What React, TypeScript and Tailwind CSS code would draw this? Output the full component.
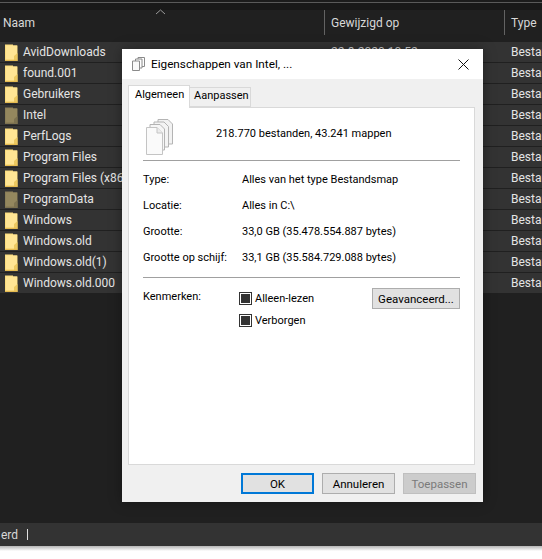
const names: [string, boolean][] = [
  ["AvidDownloads", false],
  ["found.001", false],
  ["Gebruikers", false],
  ["Intel", true],
  ["PerfLogs", false],
  ["Program Files", false],
  ["Program Files (x86)", false],
  ["ProgramData", true],
  ["Windows", false],
  ["Windows.old", false],
  ["Windows.old(1)", false],
  ["Windows.old.000", false],
];

function Folder({ dim }: { dim: boolean }) {
  return (
    <svg width="13" height="17" viewBox="0 0 13 17" className="shrink-0">
      <path d="M0 0.5 H8 V1.5 H12.5 V17 H0 Z" fill={dim ? "#8b7f58" : "#fbdc7c"} />
      <path d="M1 1.5 H12 V15.5 H1 Z" fill={dim ? "#94875e" : "#ffe594"} />
      <path d="M9 16 V12 L12.5 9 V16 Z" fill={dim ? "#7d7250" : "#ecc860"} />
      <path d="M0 15.8 H12.5 V17 H0 Z" fill={dim ? "#7d7250" : "#e6bb50"} />
    </svg>
  );
}

function SmallPages() {
  return (
    <svg width="13" height="14" viewBox="0 0 13 14" fill="none">
      <path d="M6 0.5 H12.5 V9.5 H6 Z" fill="#ffffff" stroke="#8a8a8a" />
      <path d="M3.5 2 H10 V11 H3.5 Z" fill="#ffffff" stroke="#8a8a8a" />
      <path d="M0.5 4 H7.5 V13.5 H0.5 Z" fill="#f8f8f8" stroke="#8a8a8a" />
    </svg>
  );
}

function BigPages() {
  return (
    <svg width="27" height="36" viewBox="0 0 27 36" fill="none">
      <path d="M12 0.5 H22 L26.5 5 V25 H12 Z" fill="#f2f2f2" stroke="#b4b4b4" />
      <path d="M8 3 H18 L22.5 7.5 V28 H8 Z" fill="#f4f4f4" stroke="#b4b4b4" />
      <path d="M4 5.5 H14 L18.5 10 V31 H4 Z" fill="#f6f6f6" stroke="#b4b4b4" />
      <path d="M0.5 8.5 H11 L16.5 14 V35.5 H0.5 Z" fill="#fafafa" stroke="#c4c4c4" />
      <path d="M11 8.5 V14 H16.5" fill="#ececec" stroke="#c4c4c4" />
    </svg>
  );
}

function Check({ label }: { label: string }) {
  return (
    <div className="flex items-center gap-[3px] h-[13px]">
      <div className="w-[13px] h-[13px] border border-[#333333] bg-white flex items-center justify-center">
        <div className="w-[9px] h-[9px] bg-[#333333]" />
      </div>
      <span>{label}</span>
    </div>
  );
}

function Row({ label, value }: { label: string; value: string }) {
  return (
    <div className="flex h-[26px] items-center">
      <div className="w-[99px] shrink-0">{label}</div>
      <div className="whitespace-nowrap">{value}</div>
    </div>
  );
}

export default function App() {
  return (
    <div
      className="relative w-[542px] h-[559px] overflow-hidden bg-white flex flex-col text-[11px] leading-[16px]"
      style={{ fontFamily: 'Roboto, "Noto Sans", sans-serif' }}
    >
      <div className="h-[546px] bg-[#202020] flex flex-col">
        <div className="h-[2px] bg-[#1c1c1c]" />
        <div className="h-px bg-[#5a5a5a]" />
        <div className="h-[7px] bg-[#191919]" />
        <div className="relative h-[32px] bg-[#202020] text-[#d8d8d8] flex items-start text-[12px]">
          <div className="w-[324px] shrink-0 pl-[3px] pt-[5px]">Naam</div>
          <div className="w-[180px] shrink-0 h-[25px] border-l border-[#636363] pl-[6px] pt-[5px]">Gewijzigd op</div>
          <div className="h-[25px] border-l border-[#636363] pl-[6px] pt-[5px]">Type</div>
          <svg width="12" height="6" viewBox="0 0 12 6" className="absolute left-[155px] top-[-1px]" fill="none">
            <path d="M1 5 L5.5 1 L10 5" stroke="#9a9a9a" />
          </svg>
        </div>
        <div className="flex flex-col gap-px text-[12px]">
          {names.map(([n, dim], i) => (
            <div key={n} className="h-[20px] bg-[#333333] flex items-center text-[#e4e4e4]">
              <div className="w-[331px] shrink-0 flex items-center pl-[5px] gap-[5px]">
                <Folder dim={dim} />
                <span className="whitespace-nowrap">{n}</span>
              </div>
              <div className="w-[180px] shrink-0 text-[#d0d0d0] whitespace-nowrap">
                {i === 0 ? "22-8-2020 10:52" : ""}
              </div>
              <div className="whitespace-nowrap">Bestandsmap</div>
            </div>
          ))}
        </div>
        <div className="flex-1" />
        <div className="h-[23px] bg-[#333333] text-[#d8d8d8] flex items-center text-[12px]">
          <span className="ml-[1px] w-[16px]">erd</span>
          <div className="ml-[10px] w-px h-[11px] bg-[#e0e0e0]" />
        </div>
      </div>
      <div className="h-[5px] bg-gradient-to-b from-[#b5b5b5] to-white" />

      <div className="absolute left-[122px] top-[49px] w-[361px] h-[453px] bg-[#f0f0f0] text-black flex flex-col shadow-[0_0_12px_rgba(0,0,0,0.35)]">
        <div className="h-[30px] bg-white flex items-center pl-[10px] pr-[14px] shrink-0">
          <SmallPages />
          <span className="ml-[6px] flex-1 text-[11.75px]">Eigenschappen van Intel, ...</span>
          <svg width="11" height="11" viewBox="0 0 11 11" fill="none">
            <path d="M0.5 0.5 L10.5 10.5 M10.5 0.5 L0.5 10.5" stroke="#111111" strokeWidth="1" />
          </svg>
        </div>
        <div className="flex items-end h-[28px] pl-[6px] shrink-0 relative z-10">
          <div className="w-[62px] h-[23px] bg-white border border-b-0 border-[#d9d9d9] pl-[6px] pt-[1px] mb-[-1px] whitespace-nowrap">Algemeen</div>
          <div className="w-[61px] h-[20px] bg-[#f0f0f0] border border-l-0 border-[#d9d9d9] pl-[4px] whitespace-nowrap">Aanpassen</div>
        </div>
        <div className="ml-[6px] mr-[8px] h-[358px] bg-white border border-[#d9d9d9] px-[14px] flex flex-col shrink-0">
          <div className="flex items-start h-[52px] shrink-0">
            <div className="w-[73px] pl-[3px] pt-[11px] shrink-0">
              <BigPages />
            </div>
            <span className="pt-[18px]">218.770 bestanden, 43.241 mappen</span>
          </div>
          <div className="h-px bg-[#a0a0a0] shrink-0" />
          <div className="pt-[6px] shrink-0">
            <Row label="Type:" value="Alles van het type Bestandsmap" />
            <Row label="Locatie:" value="Alles in C:\" />
            <Row label="Grootte:" value="33,0 GB (35.478.554.887 bytes)" />
            <Row label="Grootte op schijf:" value="33,1 GB (35.584.729.088 bytes)" />
          </div>
          <div className="h-px bg-[#a0a0a0] mt-[6px] shrink-0" />
          <div className="flex mt-[10px]">
            <div className="w-[96px] pt-[1px] shrink-0">Kenmerken:</div>
            <div className="flex flex-col gap-[9px] pt-[4px]">
              <Check label="Alleen-lezen" />
              <Check label="Verborgen" />
            </div>
            <div className="ml-auto w-[88px] h-[21px] bg-[#e1e1e1] border border-[#adadad] flex items-center justify-center text-[11.5px]">
              Geavanceerd...
            </div>
          </div>
        </div>
        <div className="flex justify-end gap-[8px] pr-[7px] pt-[8px] text-[11.5px]">
          <div className="w-[73px] h-[21px] bg-[#e1e1e1] border-2 border-[#0078d7] flex items-center justify-center">OK</div>
          <div className="w-[73px] h-[21px] bg-[#e1e1e1] border border-[#adadad] flex items-center justify-center">Annuleren</div>
          <div className="w-[73px] h-[21px] bg-[#cccccc] border border-[#bfbfbf] text-[#7a7a7a] flex items-center justify-center">Toepassen</div>
        </div>
      </div>
    </div>
  );
}
